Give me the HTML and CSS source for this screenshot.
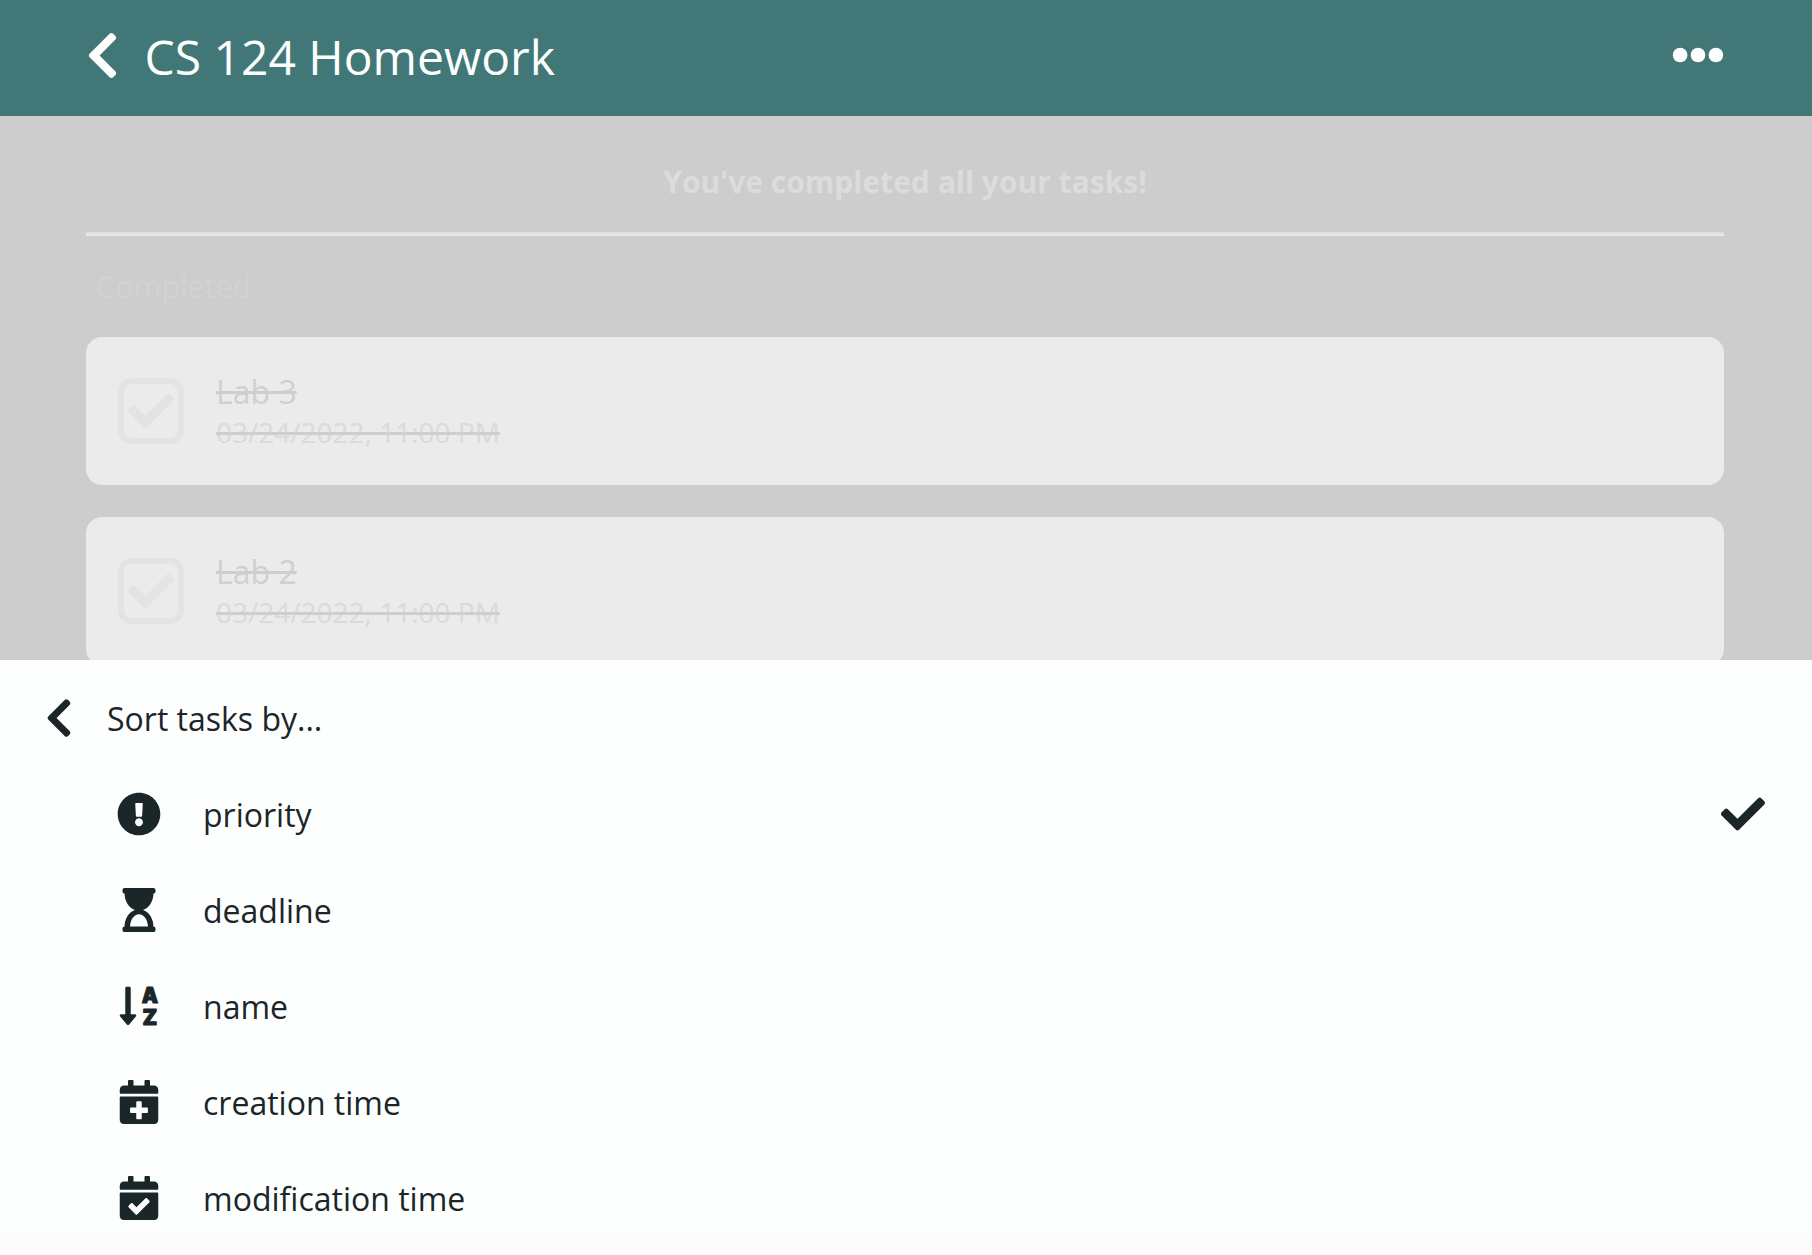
FILE: index.html
```html
<!DOCTYPE html>
<html lang="en">
<head>
<meta charset="utf-8">
<title>CS 124 Homework</title>
<link rel="stylesheet" href="styles.css">
</head>
<body>
<div class="app">
  <header class="topbar">
    <svg class="back" viewBox="0 0 320 512"><path d="M34.52 239.03L228.87 44.69c9.37-9.37 24.57-9.37 33.94 0l22.67 22.67c9.36 9.36 9.37 24.52.04 33.9L131.49 256l154.02 154.75c9.34 9.38 9.32 24.54-.04 33.9l-22.67 22.67c-9.37 9.37-24.57 9.37-33.94 0L34.52 272.97c-9.37-9.37-9.37-24.57 0-33.94z"/></svg>
    <h1 class="title">CS 124 Homework</h1>
    <svg class="more" viewBox="0 0 512 512"><circle cx="80" cy="256" r="72"/><circle cx="256" cy="256" r="72"/><circle cx="432" cy="256" r="72"/></svg>
  </header>
  <main class="tasks">
    <p class="done-message">You've completed all your tasks!</p>
    <div class="divider"></div>
    <h2 class="section">Completed</h2>
    <div class="card">
      <div class="checkbox"><svg viewBox="0 0 512 512"><path d="M173.898 439.404l-166.4-166.4c-9.997-9.997-9.997-26.206 0-36.204l36.203-36.204c9.997-9.998 26.207-9.998 36.204 0L192 312.69 432.095 72.596c9.997-9.997 26.207-9.997 36.204 0l36.203 36.204c9.997 9.997 9.997 26.206 0 36.204l-294.4 294.401c-9.998 9.997-26.207 9.997-36.204-.001z"/></svg></div>
      <div class="info"><span class="name">Lab 3</span><span class="date">03/24/2022, 11:00 PM</span></div>
    </div>
    <div class="card">
      <div class="checkbox"><svg viewBox="0 0 512 512"><path d="M173.898 439.404l-166.4-166.4c-9.997-9.997-9.997-26.206 0-36.204l36.203-36.204c9.997-9.998 26.207-9.998 36.204 0L192 312.69 432.095 72.596c9.997-9.997 26.207-9.997 36.204 0l36.203 36.204c9.997 9.997 9.997 26.206 0 36.204l-294.4 294.401c-9.998 9.997-26.207 9.997-36.204-.001z"/></svg></div>
      <div class="info"><span class="name">Lab 2</span><span class="date">03/24/2022, 11:00 PM</span></div>
    </div>
  </main>
  <section class="sheet">
    <div class="row heading">
      <svg class="icon chevron" viewBox="0 0 320 512"><path d="M34.52 239.03L228.87 44.69c9.37-9.37 24.57-9.37 33.94 0l22.67 22.67c9.36 9.36 9.37 24.52.04 33.9L131.49 256l154.02 154.75c9.34 9.38 9.32 24.54-.04 33.9l-22.67 22.67c-9.37 9.37-24.57 9.37-33.94 0L34.52 272.97c-9.37-9.37-9.37-24.57 0-33.94z"/></svg>
      <span class="label">Sort tasks by...</span>
    </div>
    <div class="row option">
      <svg class="icon" viewBox="0 0 512 512"><path d="M504 256c0 136.997-111.043 248-248 248S8 392.997 8 256C8 119.083 119.043 8 256 8s248 111.083 248 248zm-248 50c-25.405 0-46 20.595-46 46s20.595 46 46 46 46-20.595 46-46-20.595-46-46-46zm-43.673-165.346l7.418 136c.347 6.364 5.609 11.346 11.982 11.346h48.546c6.373 0 11.635-4.982 11.982-11.346l7.418-136c.375-6.874-5.098-12.654-11.982-12.654h-63.383c-6.884 0-12.356 5.78-11.981 12.654z"/></svg>
      <span class="label">priority</span>
      <svg class="icon selected" viewBox="0 0 512 512"><path d="M173.898 439.404l-166.4-166.4c-9.997-9.997-9.997-26.206 0-36.204l36.203-36.204c9.997-9.998 26.207-9.998 36.204 0L192 312.69 432.095 72.596c9.997-9.997 26.207-9.997 36.204 0l36.203 36.204c9.997 9.997 9.997 26.206 0 36.204l-294.4 294.401c-9.998 9.997-26.207 9.997-36.204-.001z"/></svg>
    </div>
    <div class="row option">
      <svg class="icon" viewBox="0 0 384 512"><path d="M360 0H24C10.745 0 0 10.745 0 24v16c0 13.255 10.745 24 24 24 0 90.965 51.016 167.734 120.842 192C75.016 280.266 24 357.035 24 448c-13.255 0-24 10.745-24 24v16c0 13.255 10.745 24 24 24h336c13.255 0 24-10.745 24-24v-16c0-13.255-10.745-24-24-24 0-90.965-51.016-167.734-120.842-192C308.984 231.734 360 154.965 360 64c13.255 0 24-10.745 24-24V24c0-13.255-10.745-24-24-24zm-64 448H88c0-77.458 46.204-144 104-144 57.786 0 104 66.517 104 144z"/></svg>
      <span class="label">deadline</span>
    </div>
    <div class="row option">
      <svg class="icon sort-icon" viewBox="0 0 448 512"><path d="M176 352h-48V48a16 16 0 0 0-16-16H80a16 16 0 0 0-16 16v304H16c-14.19 0-21.36 17.24-11.29 27.31l80 96a16 16 0 0 0 22.62 0l80-96C197.35 369.26 190.22 352 176 352z"/><text class="sort-letter" x="352" y="217" textLength="190" lengthAdjust="spacingAndGlyphs">A</text><text class="sort-letter" x="352" y="473" textLength="172" lengthAdjust="spacingAndGlyphs">Z</text></svg>
      <span class="label">name</span>
    </div>
    <div class="row option">
      <svg class="icon" viewBox="0 0 448 512"><path d="M436 160H12c-6.6 0-12-5.4-12-12v-36c0-26.5 21.5-48 48-48h48V12c0-6.6 5.4-12 12-12h40c6.6 0 12 5.4 12 12v52h128V12c0-6.6 5.4-12 12-12h40c6.6 0 12 5.4 12 12v52h48c26.5 0 48 21.5 48 48v36c0 6.6-5.4 12-12 12zM12 192h424c6.6 0 12 5.4 12 12v260c0 26.5-21.5 48-48 48H48c-26.5 0-48-21.5-48-48V204c0-6.6 5.4-12 12-12zm316 140c0-6.6-5.4-12-12-12h-60v-60c0-6.6-5.4-12-12-12h-40c-6.6 0-12 5.4-12 12v60h-60c-6.6 0-12 5.4-12 12v40c0 6.6 5.4 12 12 12h60v60c0 6.6 5.4 12 12 12h40c6.6 0 12-5.4 12-12v-60h60c6.6 0 12-5.4 12-12v-40z"/></svg>
      <span class="label">creation time</span>
    </div>
    <div class="row option">
      <svg class="icon" viewBox="0 0 448 512"><path d="M436 160H12c-6.6 0-12-5.4-12-12v-36c0-26.5 21.5-48 48-48h48V12c0-6.6 5.4-12 12-12h40c6.6 0 12 5.4 12 12v52h128V12c0-6.6 5.4-12 12-12h40c6.6 0 12 5.4 12 12v52h48c26.5 0 48 21.5 48 48v36c0 6.6-5.4 12-12 12zM12 192h424c6.6 0 12 5.4 12 12v260c0 26.5-21.5 48-48 48H48c-26.5 0-48-21.5-48-48V204c0-6.6 5.4-12 12-12zm333.296 95.947l-28.169-28.398c-4.667-4.705-12.265-4.736-16.97-.068L194.12 364.665l-45.98-46.352c-4.667-4.705-12.266-4.736-16.971-.068l-28.397 28.17c-4.705 4.667-4.736 12.265-.068 16.97l82.601 83.269c4.667 4.705 12.265 4.736 16.97.068l142.953-141.805c4.705-4.667 4.736-12.265.068-16.97z"/></svg>
      <span class="label">modification time</span>
    </div>
  </section>
</div>
</body>
</html>
```
FILE: styles.css
```css
* { box-sizing: border-box; margin: 0; padding: 0; }

body {
  font-family: "Open Sans", "Noto Sans", sans-serif;
  color: #1b2628;
  background: #cdcdcd;
}

.app {
  display: flex;
  flex-direction: column;
  height: 1255px;
  overflow: hidden;
}

svg { display: block; flex: none; fill: currentColor; }

.topbar {
  display: flex;
  align-items: center;
  flex: none;
  height: 116px;
  padding: 0 88px 5px 86px;
  background: #427777;
  color: #fdfefe;
}
.back { width: 33px; height: 53px; }
.title {
  flex: 1;
  margin-left: 25.5px;
  padding-top: 3px;
  font-size: 48px;
  font-weight: 400;
  line-height: 64px;
}
.more { width: 52px; height: 52px; margin-top: -2px; }

.tasks {
  flex: none;
  height: 544px;
  padding: 44px 88px 0 86px;
  overflow: hidden;
}
.done-message {
  font-size: 30px;
  font-weight: 700;
  line-height: 44px;
  text-align: center;
  color: #dcdcdc;
}
.divider {
  height: 4px;
  margin-top: 28px;
  border-top: 2px solid #dedede;
  border-bottom: 2px solid #e8e8e8;
}
.section {
  margin: 30px 0;
  padding-left: 10px;
  font-size: 30.4px;
  font-weight: 400;
  line-height: 41px;
  color: #d2d2d2;
}
.card {
  display: flex;
  align-items: center;
  gap: 32px;
  height: 148px;
  margin-bottom: 32px;
  padding: 0 32px;
  border-radius: 16px;
  background: #ebebeb;
}
.checkbox {
  display: grid;
  place-items: center;
  width: 66px;
  height: 66px;
  border: 6px solid #e4e2e3;
  border-radius: 14px;
  color: #e4e2e3;
}
.checkbox svg { width: 46px; height: 46px; }
.info {
  display: flex;
  flex-direction: column;
  align-items: flex-start;
  padding-top: 2px;
}
.name, .date {
  line-height: 40px;
  text-decoration: line-through #cecece 3px;
}
.name { font-size: 32px; color: #d0d0d0; }
.date { font-size: 28px; color: #d7dcdb; }

.sheet {
  flex: none;
  height: 595px;
  padding: 9.5px 47px 0 45px;
  background: linear-gradient(#fdfefe 565px, #f9faf9 595px);
}
.row {
  display: flex;
  align-items: center;
  height: 96px;
}
.icon { width: 44px; height: 44px; }
.chevron { width: 28px; }
.label {
  flex: 1;
  padding-top: 3px;
  font-size: 32px;
  line-height: 44px;
}
.heading .label { margin-left: 34px; }
.option { padding-left: 72px; }
.option .label { margin-left: 42px; }
.sort-icon { overflow: visible; }
.sort-letter {
  font-family: Inter, sans-serif;
  font-size: 246px;
  font-weight: 900;
  text-anchor: middle;
  stroke: currentColor;
  stroke-width: 12px;
  stroke-linejoin: round;
}
```
